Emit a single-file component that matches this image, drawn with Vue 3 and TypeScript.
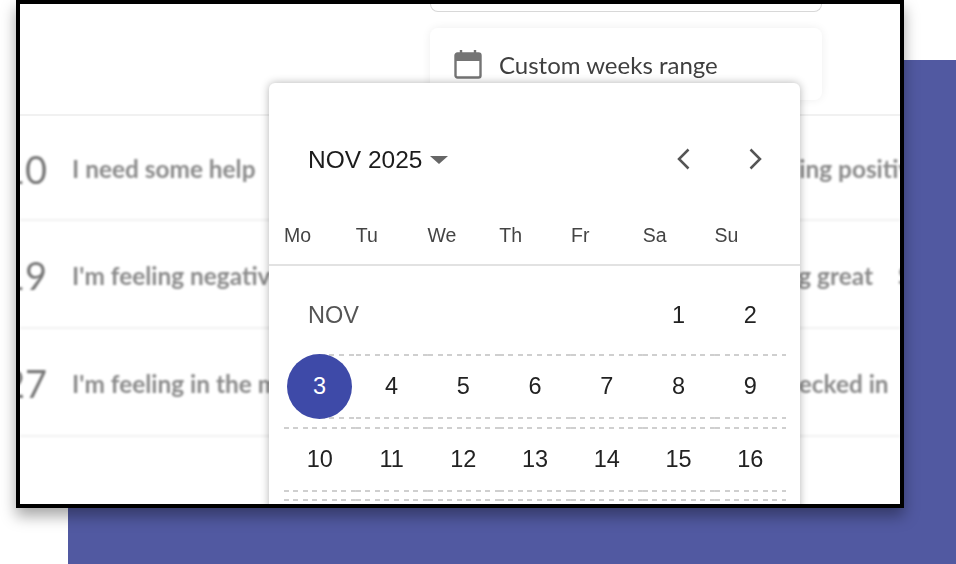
<script setup lang="ts">
interface Row {
  num: string
  left: string
  right: string
  rightPad: number
  extra?: string
}

const rows: Row[] = [
  { num: '110', left: 'I need some help', right: "I'm feeling positive", rightPad: 36 },
  { num: '119', left: "I'm feeling negative", right: "I'm feeling great", rightPad: 15, extra: 'Sad' },
  { num: '127', left: "I'm feeling in the middle", right: 'Not checked in', rightPad: 42 },
]

const weekdays = ['Mo', 'Tu', 'We', 'Th', 'Fr', 'Sa', 'Su']
const weeks = [
  [3, 4, 5, 6, 7, 8, 9],
  [10, 11, 12, 13, 14, 15, 16],
  [17, 18, 19, 20, 21, 22, 23],
]
</script>

<template>
  <div class="page">
    <div class="backdrop"></div>
    <div class="frame">
      <div class="options">
        <div class="option option-top"></div>
        <div class="option option-custom">
          <svg class="cal-icon" width="28" height="30" viewBox="0 0 28 30" fill="none">
            <rect x="1.5" y="4.5" width="25" height="24" rx="2" stroke="#747474" stroke-width="2.4" />
            <path d="M1.5 12h25V6.5a2 2 0 0 0-2-2h-21a2 2 0 0 0-2 2z" fill="#747474" />
            <path d="M7 1v5M21 1v5" stroke="#747474" stroke-width="2.4" />
          </svg>
          <span>Custom weeks range</span>
        </div>
      </div>

      <div class="list">
        <div v-for="row in rows" :key="row.num" class="row">
          <div class="num"><span>{{ row.num }}</span></div>
          <div class="label label-left">{{ row.left }}</div>
          <div class="label label-right" :style="{ paddingLeft: row.rightPad + 'px' }">{{ row.right }}</div>
          <div v-if="row.extra" class="label">{{ row.extra }}</div>
        </div>
      </div>

      <div class="picker">
        <div class="picker-head">
          <div class="month-btn">
            <span>NOV 2025</span>
            <svg width="18" height="10" viewBox="0 0 18 10"><path d="M0 1h18l-9 8z" fill="#666" /></svg>
          </div>
          <div class="arrows">
            <svg width="14" height="22" viewBox="0 0 14 22" fill="none"><path d="M12.5 1.5 3 11l9.5 9.5" stroke="#555" stroke-width="2.5" /></svg>
            <svg width="14" height="22" viewBox="0 0 14 22" fill="none"><path d="M1.5 1.5 11 11l-9.5 9.5" stroke="#555" stroke-width="2.5" /></svg>
          </div>
        </div>
        <div class="weekdays">
          <span v-for="d in weekdays" :key="d">{{ d }}</span>
        </div>
        <div class="month">
          <div class="week first">
            <span class="month-name">NOV</span>
            <span class="day plain">1</span>
            <span class="day plain">2</span>
          </div>
          <div v-for="w in weeks" :key="w[0]" class="week">
            <span v-for="d in w" :key="d" class="day" :class="{ selected: d === 3 }">
              <i v-if="d === 3">{{ d }}</i>
              <template v-else>{{ d }}</template>
            </span>
          </div>
        </div>
      </div>
    </div>
  </div>
</template>

<style scoped>
.page {
  position: relative;
  width: 956px;
  height: 564px;
  overflow: hidden;
  background: #fff;
}

.backdrop {
  position: absolute;
  left: 68px;
  top: 60px;
  right: 0;
  bottom: 0;
  background: #5159a1;
}

.frame {
  position: absolute;
  left: 16px;
  top: 0;
  width: 880px;
  height: 500px;
  border: 4px solid #000;
  background: #fff;
  overflow: hidden;
  box-shadow: 0 8px 14px rgba(0, 0, 0, 0.35);
  font-family: Lato, "Liberation Sans", sans-serif;
}

.options {
  height: 110px;
  display: flex;
  flex-direction: column;
  align-items: flex-end;
  gap: 16px;
  padding-right: 78px;
}

.option {
  width: 392px;
  box-sizing: border-box;
  background: #fff;
}

.option-top {
  height: 8px;
  flex: none;
  border: 1px solid #d8d8d8;
  border-top: 0;
  border-radius: 0 0 8px 8px;
}

.option-custom {
  height: 72px;
  flex: none;
  display: flex;
  align-items: center;
  gap: 17px;
  padding-left: 24px;
  border-radius: 8px;
  box-shadow: 0 0 10px rgba(0, 0, 0, 0.07);
  font-size: 24px;
  color: #3f3f3f;
  filter: blur(0.4px);
}

.cal-icon {
  flex: none;
}

.list {
  border-top: 2px solid #f1f1f1;
}

.row {
  height: 104px;
  padding-top: 2px;
  display: flex;
  align-items: center;
  border-bottom: 2px solid #f1f1f1;
  white-space: nowrap;
  filter: blur(1px);
}

.row:first-child {
  height: 101px;
}

.num {
  width: 27px;
  flex: none;
  display: flex;
  justify-content: flex-end;
  font-size: 38px;
  color: #777;
}

.label {
  flex: none;
  font-size: 24.4px;
  font-weight: 700;
  color: #8a8a8a;
}

.label-left {
  width: 612px;
  margin-left: 25px;
}

.label-right {
  width: 214px;
  box-sizing: border-box;
}

.picker {
  position: absolute;
  left: 249px;
  top: 79px;
  width: 531px;
  height: 500px;
  background: #fff;
  border-radius: 6px 6px 0 0;
  box-shadow: 0 0 8px rgba(0, 0, 0, 0.3);
  font-family: "Liberation Sans", Arial, sans-serif;
  color: #222;
  filter: blur(0.3px);
}

.picker-head {
  height: 116px;
  box-sizing: border-box;
  padding: 38px 37px 0 39px;
  display: flex;
  align-items: center;
  justify-content: space-between;
}

.month-btn {
  display: flex;
  align-items: center;
  gap: 8px;
  font-size: 24.5px;
  color: #1c1c1c;
}

.arrows {
  display: flex;
  gap: 59px;
  margin-top: -2px;
}

.weekdays {
  height: 67px;
  box-sizing: border-box;
  padding: 8px 15px 0;
  display: grid;
  grid-template-columns: repeat(7, 71.75px);
  align-items: center;
  border-bottom: 2px solid #e2e2e2;
  font-size: 19.5px;
  color: #444;
}

.month {
  padding: 0 15px;
}

.week {
  display: grid;
  grid-template-columns: repeat(7, 71.75px);
  margin-bottom: 7.5px;
  font-size: 23.5px;
}

.week.first {
  height: 88px;
  box-sizing: border-box;
  padding-top: 10px;
  margin-bottom: 0;
}

.month-name {
  grid-column: 1 / span 5;
  align-self: center;
  padding-left: 24px;
  color: #555;
}

.day {
  position: relative;
  height: 65px;
  display: flex;
  align-items: center;
  justify-content: center;
  background-image:
    repeating-linear-gradient(90deg, #cfcfcf 0 5px, transparent 5px 9.54px),
    repeating-linear-gradient(90deg, #cfcfcf 0 5px, transparent 5px 9.54px);
  background-size: 100% 2px;
  background-position: top, bottom;
  background-repeat: no-repeat;
}

.day.plain {
  height: auto;
  background: none;
  align-self: center;
}

.day.selected {
  background: none;
}

.day.selected::after {
  content: "";
  position: absolute;
  left: 50%;
  right: 0;
  top: 0;
  bottom: 0;
  background-image:
    repeating-linear-gradient(90deg, #cfcfcf 0 5px, transparent 5px 9.54px),
    repeating-linear-gradient(90deg, #cfcfcf 0 5px, transparent 5px 9.54px);
  background-size: 100% 2px;
  background-position: top, bottom;
  background-repeat: no-repeat;
}

.day.selected i {
  position: absolute;
  z-index: 1;
  left: 3px;
  top: 0;
  width: 65px;
  height: 65px;
  border-radius: 50%;
  display: flex;
  align-items: center;
  justify-content: center;
  background: #3e4aa8;
  color: #fff;
  font-style: normal;
}
</style>
